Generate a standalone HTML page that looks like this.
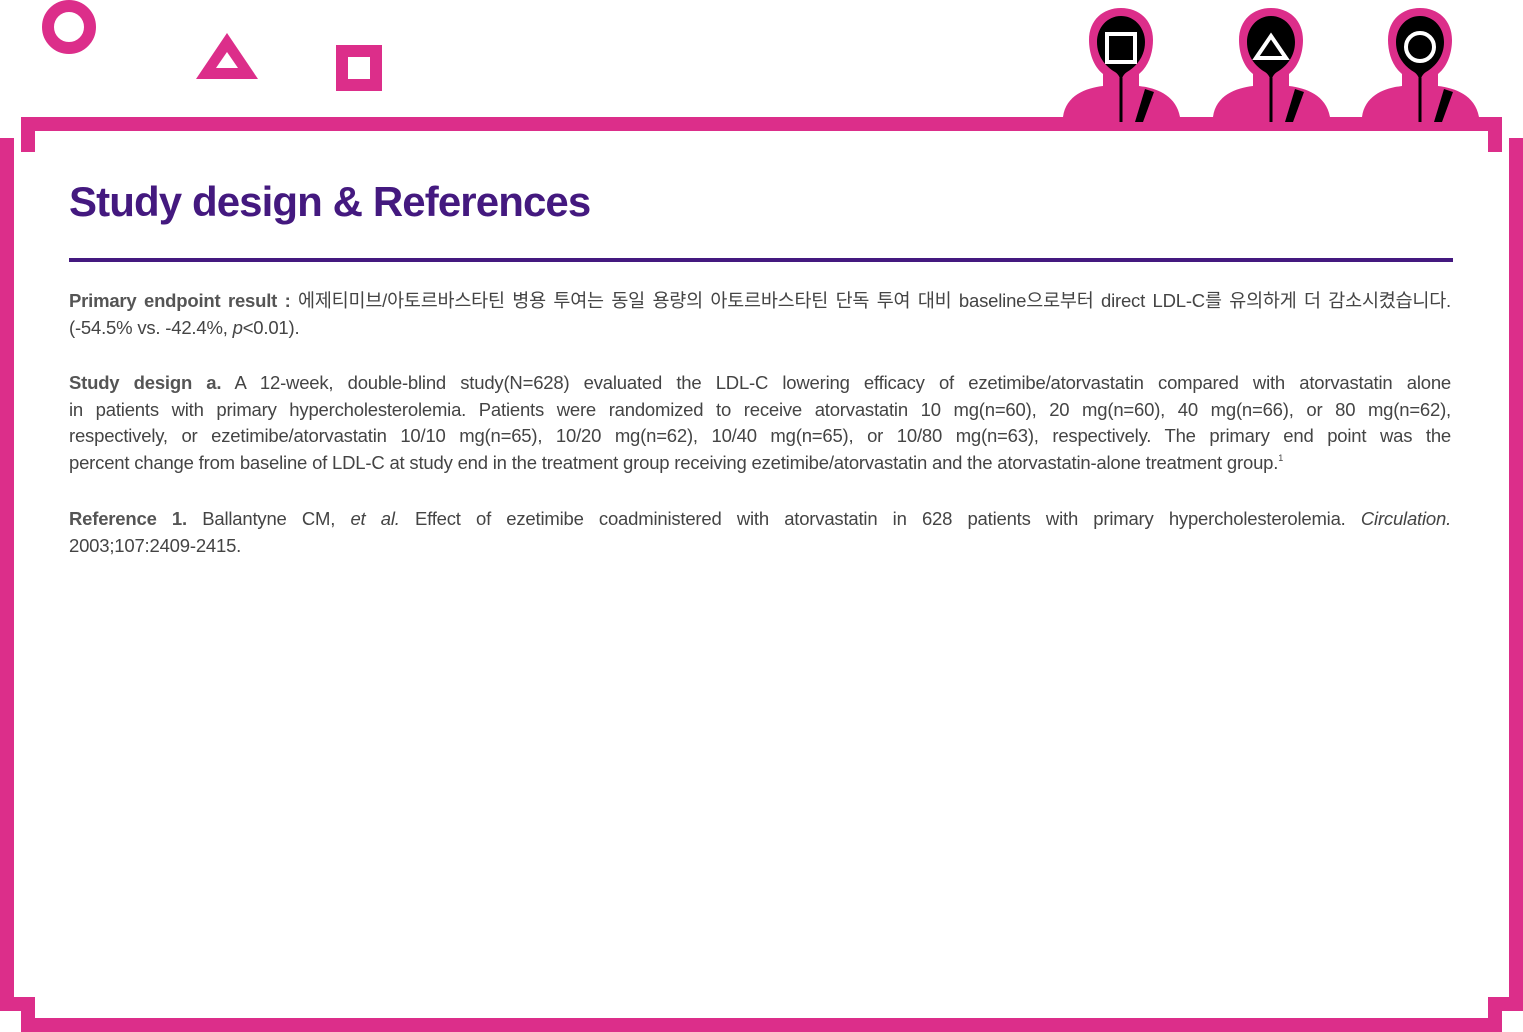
<!DOCTYPE html>
<html><head><meta charset="utf-8">
<style>
html,body{margin:0;padding:0;background:#fff;}
body{width:1523px;height:1032px;position:relative;overflow:hidden;font-family:"Liberation Sans","Noto Sans CJK KR",sans-serif;}
svg.bg{position:absolute;left:0;top:0;}
h1{position:absolute;left:69px;top:178px;margin:0;font-size:42px;font-weight:bold;color:#44197f;letter-spacing:-0.9px;white-space:nowrap;}
.rule{position:absolute;left:69px;top:258px;width:1384px;height:4px;background:#44197f;}
.txt{position:absolute;left:69px;width:1382px;color:#444;font-size:18.5px;line-height:26.6px;letter-spacing:-0.2px;}
.txt div{white-space:nowrap;text-align:justify;text-align-last:justify;}
.txt div.l{text-align-last:left;}
b{font-weight:bold;color:#555;}
sup{font-size:9px;line-height:0;vertical-align:8px;}
</style></head><body>
<svg class="bg" width="1523" height="1032" viewBox="0 0 1523 1032">
<g fill="#dc2e8a">
<rect x="21" y="117" width="1481" height="14"/>
<rect x="21" y="131" width="14" height="21"/>
<rect x="0" y="138" width="14" height="873"/>
<rect x="0" y="997" width="35" height="14"/>
<rect x="21" y="997" width="14" height="35"/>
<rect x="21" y="1018" width="1481" height="14"/>
<rect x="1488" y="131" width="14" height="21"/>
<rect x="1509" y="138" width="14" height="873"/>
<rect x="1488" y="997" width="35" height="14"/>
<rect x="1488" y="997" width="14" height="35"/>
</g>
<circle cx="69" cy="27" r="21" fill="none" stroke="#dc2e8a" stroke-width="12"/>
<polygon points="227,33 258,79 196,79" fill="#dc2e8a"/>
<polygon points="227,52 238,68 216,68" fill="#fff"/>
<rect x="336" y="45" width="46" height="46" fill="#dc2e8a"/>
<rect x="348" y="57" width="22" height="22" fill="#fff"/>
<defs>
<g id="guard">
<path d="M-58,117 C-55,95 -35,88 -18,86 L-18,74 C-28,66 -32,52 -32,40 C-32,20 -18,8 0,8 C18,8 32,20 32,40 C32,52 28,66 18,74 L18,86 C35,88 55,95 59,117 Z" fill="#dc2e8a"/>
<path d="M0,16 C14,16 24,28 24,42 C24,56 16,66 6,72 C3,74 1,77 1,80 L-1,80 C-1,77 -3,74 -6,72 C-16,66 -24,56 -24,42 C-24,28 -14,16 0,16 Z" fill="#000"/>
<rect x="-1.5" y="78" width="3" height="44" fill="#000"/>
<polygon points="24,89 33,92 22,122 14,122" fill="#000"/>
</g>
</defs>
<use href="#guard" x="1121" y="0"/>
<use href="#guard" x="1271" y="0"/>
<use href="#guard" x="1420" y="0"/>
<rect x="1107" y="34" width="28" height="28" fill="none" stroke="#fff" stroke-width="4"/>
<polygon points="1271,36 1286,58 1256,58" fill="none" stroke="#fff" stroke-width="4"/>
<circle cx="1420" cy="47" r="14" fill="none" stroke="#fff" stroke-width="4"/>
</svg>

<h1>Study design &amp; References</h1>
<div class="rule"></div>

<div class="txt" style="top:288px;">
<div><b>Primary endpoint result :</b> 에제티미브/아토르바스타틴 병용 투여는 동일 용량의 아토르바스타틴 단독 투여 대비 baseline으로부터 direct LDL-C를 유의하게 더 감소시켰습니다.</div>
<div class="l">(-54.5% vs. -42.4%, <i>p</i>&lt;0.01).</div>
</div>

<div class="txt" style="top:370px;">
<div><b>Study design a.</b> A 12-week, double-blind study(N=628) evaluated the LDL-C lowering efficacy of ezetimibe/atorvastatin compared with atorvastatin alone</div>
<div>in patients with primary hypercholesterolemia. Patients were randomized to receive atorvastatin 10 mg(n=60), 20 mg(n=60), 40 mg(n=66), or 80 mg(n=62),</div>
<div>respectively, or ezetimibe/atorvastatin 10/10 mg(n=65), 10/20 mg(n=62), 10/40 mg(n=65), or 10/80 mg(n=63), respectively. The primary end point was the</div>
<div class="l">percent change from baseline of LDL-C at study end in the treatment group receiving ezetimibe/atorvastatin and the atorvastatin-alone treatment group.<sup>1</sup></div>
</div>

<div class="txt" style="top:506px;">
<div><b>Reference 1.</b> Ballantyne CM, <i>et al.</i> Effect of ezetimibe coadministered with atorvastatin in 628 patients with primary hypercholesterolemia. <i>Circulation.</i></div>
<div class="l">2003;107:2409-2415.</div>
</div>
</body></html>
